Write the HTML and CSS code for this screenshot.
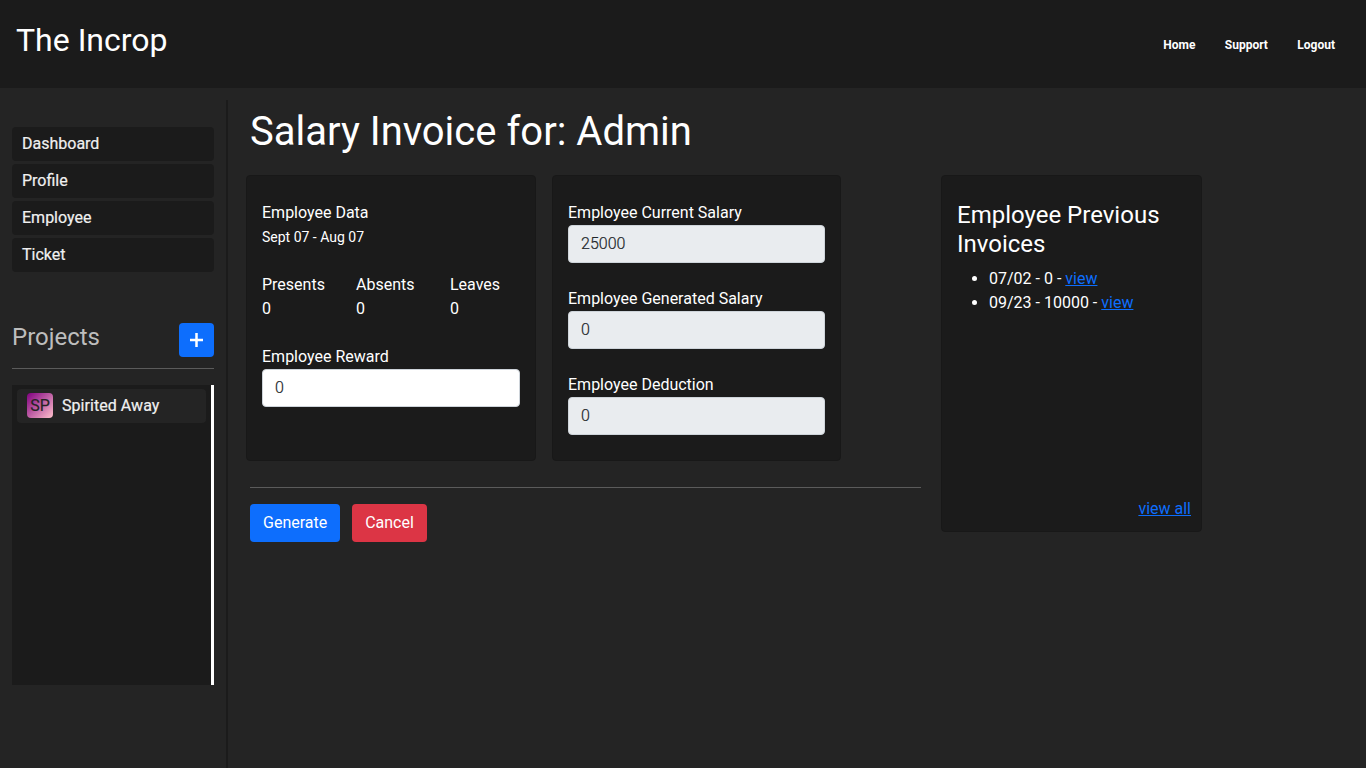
FILE: index.html
```html
<!DOCTYPE html>
<html lang="en">
<head>
<meta charset="utf-8">
<title>The Incrop</title>
<link rel="stylesheet" href="styles.css">
</head>
<body>
<header class="topbar">
  <h2 class="brand">The Incrop</h2>
  <nav class="topnav"><a>Home</a><a>Support</a><a>Logout</a></nav>
</header>
<div class="page">
  <aside class="sidebar">
    <nav class="menu"><a>Dashboard</a><a>Profile</a><a>Employee</a><a>Ticket</a></nav>
    <div class="projects-head">
      <h4>Projects</h4>
      <button class="add" aria-label="Add project"><svg width="13" height="14" viewBox="0 0 13 14"><path d="M6.5 0V14M0 7H13" stroke="#fff" stroke-width="2.5"/></svg></button>
    </div>
    <div class="projects">
      <a class="project"><span class="avatar">SP</span><span>Spirited Away</span></a>
    </div>
  </aside>
  <main class="main">
    <h1>Salary Invoice for: Admin</h1>
    <div class="columns">
      <section class="invoice">
        <div class="cards">
          <div class="card">
            <div>Employee Data</div>
            <small class="period">Sept 07 - Aug 07</small>
            <div class="stats">
              <div>Presents<br>0</div><div>Absents<br>0</div><div>Leaves<br>0</div>
            </div>
            <label class="field">Employee Reward<input type="text" value="0"></label>
          </div>
          <div class="card">
            <label class="field">Employee Current Salary<input type="text" value="25000" readonly></label>
            <label class="field">Employee Generated Salary<input type="text" value="0" readonly></label>
            <label class="field">Employee Deduction<input type="text" value="0" readonly></label>
          </div>
        </div>
        <div class="actions">
          <button class="btn primary">Generate</button>
          <button class="btn danger">Cancel</button>
        </div>
      </section>
      <section class="card history">
        <h4>Employee Previous Invoices</h4>
        <ul>
          <li>07/02 - 0 - <a class="link">view</a></li>
          <li>09/23 - 10000 - <a class="link">view</a></li>
        </ul>
        <a class="link all">view all</a>
      </section>
    </div>
  </main>
</div>
</body>
</html>
```
FILE: styles.css
```css
* { box-sizing: border-box; }
body {
  margin: 0;
  height: 768px;
  overflow: hidden;
  display: flex;
  flex-direction: column;
  background: #242424;
  color: #fff;
  font: 400 16px/24px Roboto, sans-serif;
}
h1, h2, h4 { margin: 0; font-weight: 400; line-height: 1.2; }
h1 { font-size: 40px; }
h4 { font-size: 24px; }
button { font: inherit; color: #fff; border: 0; padding: 0; border-radius: 4px; }

.topbar {
  height: 88px;
  flex: none;
  display: flex;
  justify-content: space-between;
  padding: 21px 31px 0 16px;
  background: #1b1b1b;
}
.brand { font-size: 32px; }
.topnav { display: flex; gap: 29.4px; padding-top: 12px; font-size: 12px; font-weight: 700; }

.page { flex: 1; display: flex; padding-top: 12px; }
.sidebar {
  width: 228px;
  flex: none;
  padding: 27px 12px 0;
  border-right: 2px solid #1b1b1b;
  color: #f0f0f0;
}
.menu { display: grid; gap: 3px; }
.menu a {
  height: 34px;
  padding: 5px 10px;
  border-radius: 4px;
  background: #1b1b1b;
}
.menu a, .project { -webkit-text-stroke: 0.2px; }
.projects-head {
  height: 46px;
  margin-top: 51px;
  display: flex;
  justify-content: space-between;
  border-bottom: 1px solid #5b5b5b;
  color: #bdbdbd;
}
.add {
  width: 35px;
  height: 34px;
  display: flex;
  align-items: center;
  justify-content: center;
  background: #0d6efd;
}
.projects {
  height: 300px;
  margin-top: 16px;
  padding: 4px 5px;
  border-right: 3px solid #fff;
  background: #1b1b1b;
}
.project {
  height: 34px;
  display: flex;
  align-items: flex-start;
  gap: 9px;
  padding: 4px 10px;
  border-radius: 4px;
  background: #242424;
  line-height: 26px;
  letter-spacing: 0.05px;
}
.avatar {
  width: 26px;
  height: 25px;
  border-radius: 4px;
  background: linear-gradient(135deg, #800080, #ffc0cb);
  color: #242424;
  text-align: center;
}

.main { padding: 8px 0 0 18px; }
.main h1 { padding-left: 4px; }
.columns { display: flex; gap: 20px; margin-top: 19px; }
.invoice { width: 675px; }
.cards { display: flex; gap: 16px; }
.card {
  width: 290px;
  height: 286px;
  padding: 25px 15px 0;
  border: 1px solid #181818;
  border-radius: 4px;
  background: #1b1b1b;
}
.cards .card + .card { width: 289px; }
.period { display: block; font-size: 14px; line-height: 24px; }
.stats { display: grid; grid-template-columns: repeat(3, 94px); margin: 24px 0; }
.field { display: block; }
.field + .field { margin-top: 24px; }
.field input {
  display: block;
  width: 100%;
  height: 38px;
  padding: 5px 12px 7px;
  border: 1px solid #ced4da;
  border-radius: 4px;
  background: #fff;
  color: #212529;
  font: 300 16px/24px Roboto, sans-serif;
  -webkit-text-stroke: 0.2px;
}
.field input:read-only { background: #e9ecef; }
.actions {
  display: flex;
  gap: 12px;
  margin: 26px 0 0 4px;
  padding-top: 16px;
  border-top: 1px solid #5b5b5b;
}
.btn { height: 38px; padding: 0 13px; }
.primary { width: 90px; background: #0d6efd; }
.danger { width: 75px; background: #dc3545; }
.history {
  width: 261px;
  height: 357px;
  padding: 25px 10px 10px 15px;
  display: flex;
  flex-direction: column;
}
.history ul { margin: 8px 0 0; padding-left: 32px; }
.link { color: #0d6efd; text-decoration: underline; }
.all { margin-top: auto; align-self: flex-end; }
```
